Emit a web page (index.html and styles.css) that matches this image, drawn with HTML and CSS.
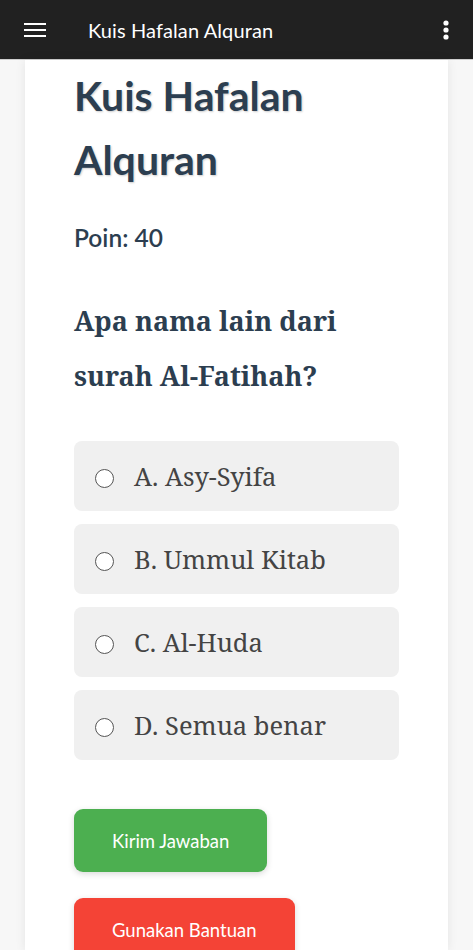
FILE: index.html
```html
<!DOCTYPE html>
<html lang="id">
<head>
<meta charset="utf-8">
<title>Kuis Hafalan Alquran</title>
<link rel="stylesheet" href="styles.css">
</head>
<body>
<header class="appbar">
  <svg class="menu" width="24" height="24" viewBox="0 0 24 24"><path d="M1 6h22M1 12h22M1 18h22" stroke="#fff" stroke-width="2.2" fill="none"/></svg>
  <span class="apptitle">Kuis Hafalan Alquran</span>
  <svg class="kebab" width="8" height="24" viewBox="0 0 8 24"><circle cx="4" cy="5" r="2.6" fill="#fff"/><circle cx="4" cy="12" r="2.6" fill="#fff"/><circle cx="4" cy="19" r="2.6" fill="#fff"/></svg>
</header>
<main class="card">
  <h1 class="title">Kuis Hafalan Alquran</h1>
  <p class="points">Poin: 40</p>
  <h2 class="question">Apa nama lain dari surah Al-Fatihah?</h2>
  <div class="options">
    <label class="option"><span class="radio"></span>A. Asy-Syifa</label>
    <label class="option"><span class="radio"></span>B. Ummul Kitab</label>
    <label class="option"><span class="radio"></span>C. Al-Huda</label>
    <label class="option"><span class="radio"></span>D. Semua benar</label>
  </div>
  <div class="actions">
    <button class="btn btn-green">Kirim Jawaban</button>
    <button class="btn btn-red">Gunakan Bantuan</button>
  </div>
</main>
</body>
</html>
```
FILE: styles.css
```css
html, body {
  margin: 0;
  padding: 0;
  background: #f7f7f7;
  height: 950px;
  overflow: hidden;
}
body {
  font-family: "Lato", "Open Sans", sans-serif;
}
.appbar {
  height: 59px;
  background: #212121;
  border-bottom: 1px solid #cfcfcf;
  display: flex;
  align-items: center;
  padding: 0 23px;
  color: #fff;
}
.menu { flex: none; }
.apptitle {
  margin-left: 41px;
  font-size: 20px;
  flex: 1;
  letter-spacing: 0.1px;
}
.kebab { flex: none; }
.card {
  background: #fff;
  margin: 0 25px;
  padding: 4px 49px 0;
  box-shadow: 0 0 10px rgba(0,0,0,0.08);
  height: 891px;
  box-sizing: border-box;
  overflow: hidden;
}
.title {
  margin: 0;
  font-size: 41px;
  line-height: 64px;
  font-weight: 700;
  color: #2c3e50;
  text-shadow: 1px 1px 2px rgba(0,0,0,0.2);
}
.points {
  margin: 31px 0 0;
  font-size: 24.5px;
  line-height: 30px;
  color: #2c3e50;
  font-weight: 600;
}
.question {
  margin: 40px 0 0;
  font-family: "Noto Serif", "DejaVu Serif", serif;
  font-size: 27px;
  line-height: 55px;
  font-weight: 700;
  color: #2c3e50;
}
.options {
  margin-top: 38px;
  display: flex;
  flex-direction: column;
  gap: 13px;
}
.option {
  height: 70px;
  background: #f0f0f0;
  border-radius: 8px;
  display: flex;
  align-items: center;
  padding-left: 21px;
  font-family: "Noto Serif", "DejaVu Serif", serif;
  font-size: 25.5px;
  color: #444;
}
.radio {
  width: 17px;
  height: 17px;
  border: 1.3px solid #555;
  border-radius: 50%;
  background: #fff;
  margin-right: 20px;
  margin-top: 4px;
  flex: none;
}
.actions {
  margin-top: 49px;
  display: flex;
  flex-direction: column;
  align-items: flex-start;
  gap: 26px;
}
.btn {
  border: none;
  border-radius: 9px;
  color: #fff;
  font-family: "Lato", sans-serif;
  font-size: 18.5px;
  height: 63px;
  padding: 0 38px;
  box-shadow: 0 2px 6px rgba(0,0,0,0.15);
  flex: none;
}
.btn-green { background: #4caf50; }
.btn-red { background: #f44336; }
```
